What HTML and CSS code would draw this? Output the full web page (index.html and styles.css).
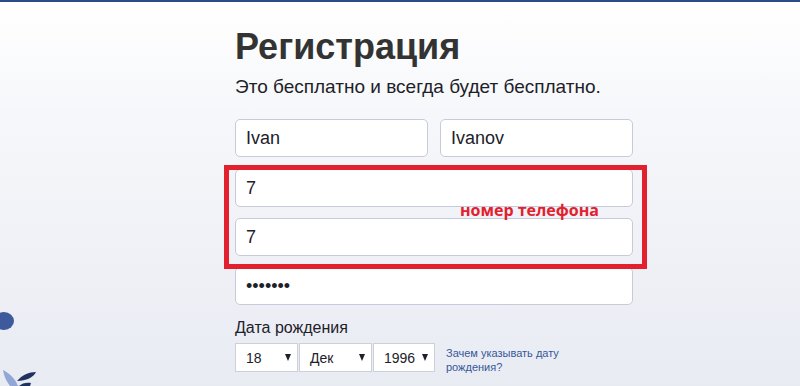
FILE: index.html
```html
<!DOCTYPE html>
<html lang="ru">
<head>
  <meta charset="UTF-8">
  <title>Регистрация</title>
  <link rel="stylesheet" href="styles.css">
</head>
<body>

<div class="page">
  <svg class="map-bits" width="60" height="98" viewBox="0 0 60 98">
    <ellipse cx="4" cy="33" rx="10" ry="9" fill="#3d5a9c"/>
    <path d="M3 82 C9 85 15 90 18 98 L10 98 C7 94 4 89 3 82 Z" fill="#93a7d6"/>
    <path d="M17 93 C22 87 29 84 36 84 C34 89 26 93 17 93 Z" fill="#1f315e"/>
    <path d="M19 98 C22 95 27 94 31 95 L30 98 Z" fill="#1f315e"/>
  </svg>

  <form class="signup">
    <h1>Регистрация</h1>
    <p class="lead">Это бесплатно и всегда будет бесплатно.</p>

    <div class="name-row">
      <div class="field">Ivan</div>
      <div class="field">Ivanov</div>
    </div>

    <div class="phone-group">
      <div class="field">7</div>
      <div class="field">7</div>
      <span class="note">номер телефона</span>
    </div>

    <div class="field pass">•••••••</div>

    <div class="birth-label">Дата рождения</div>
    <div class="birth-row">
      <div class="select day">18<i class="caret"></i></div>
      <div class="select month">Дек<i class="caret"></i></div>
      <div class="select year">1996<i class="caret"></i></div>
      <a class="why" href="#">Зачем указывать дату рождения?</a>
    </div>
  </form>
</div>

</body>
</html>
```

FILE: styles.css
```css
body {
  margin: 0;
  font-family: "Liberation Sans", Arial, sans-serif;
  color: #1d2129;
  background: linear-gradient(#ffffff 0%, #f6f7fa 30%, #e9ebf3 100%);
  height: 386px;
  overflow: hidden;
}

.page {
  position: relative;
  height: 386px;
  border-top: 2px solid #2d4a8a;
  box-sizing: border-box;
  padding-left: 235px;
}

.map-bits {
  position: absolute;
  left: 0;
  top: 286px;
}

.signup {
  width: 398px;
  display: flex;
  flex-direction: column;
}

.signup h1 {
  margin: 24px 0 0;
  font-size: 36px;
  line-height: 42px;
  font-weight: bold;
  color: #333;
}

.lead {
  margin: 8px 0 0;
  font-size: 19px;
  line-height: 22px;
}

.field {
  box-sizing: border-box;
  height: 38px;
  padding: 0 10px;
  border: 1px solid #c5cbd8;
  border-radius: 5px;
  background: #fff;
  font-size: 18px;
  line-height: 36px;
  color: #1d2129;
}

.name-row {
  display: grid;
  grid-template-columns: 1fr 1fr;
  gap: 12px;
  margin-top: 21px;
}

.phone-group {
  position: relative;
  display: flex;
  flex-direction: column;
  gap: 11px;
  margin-top: 12px;
}

.phone-group::before {
  content: "";
  position: absolute;
  left: -11px;
  right: -14px;
  top: -4px;
  bottom: -13px;
  border: 5px solid #e3202d;
  z-index: 1;
}

.note {
  position: absolute;
  left: 225px;
  top: 31px;
  font-family: "Open Sans", sans-serif;
  font-weight: bold;
  font-size: 16px;
  line-height: 20px;
  color: #e3202d;
  z-index: 2;
}

.pass {
  margin-top: 11px;
  font-size: 18px;
}

.birth-label {
  margin-top: 13px;
  font-size: 16px;
  line-height: 20px;
  color: #1d2129;
}

.birth-row {
  display: flex;
  align-items: flex-start;
  margin-top: 5px;
  gap: 1px;
}

.select {
  box-sizing: border-box;
  display: flex;
  align-items: center;
  justify-content: space-between;
  height: 29px;
  padding: 0 6px 0 10px;
  border: 1px solid #ccd0d8;
  background: #fff;
  font-size: 14px;
  color: #1d2129;
}

.select.day { width: 63px; }
.select.month { width: 73px; }
.select.year { width: 62px; }

.caret {
  width: 0;
  height: 0;
  border-left: 3px solid transparent;
  border-right: 3px solid transparent;
  border-top: 7px solid #1d2129;
}

.why {
  width: 120px;
  margin-left: 10px;
  margin-top: 3px;
  font-size: 11px;
  line-height: 14px;
  color: #365899;
  text-decoration: none;
}
```
